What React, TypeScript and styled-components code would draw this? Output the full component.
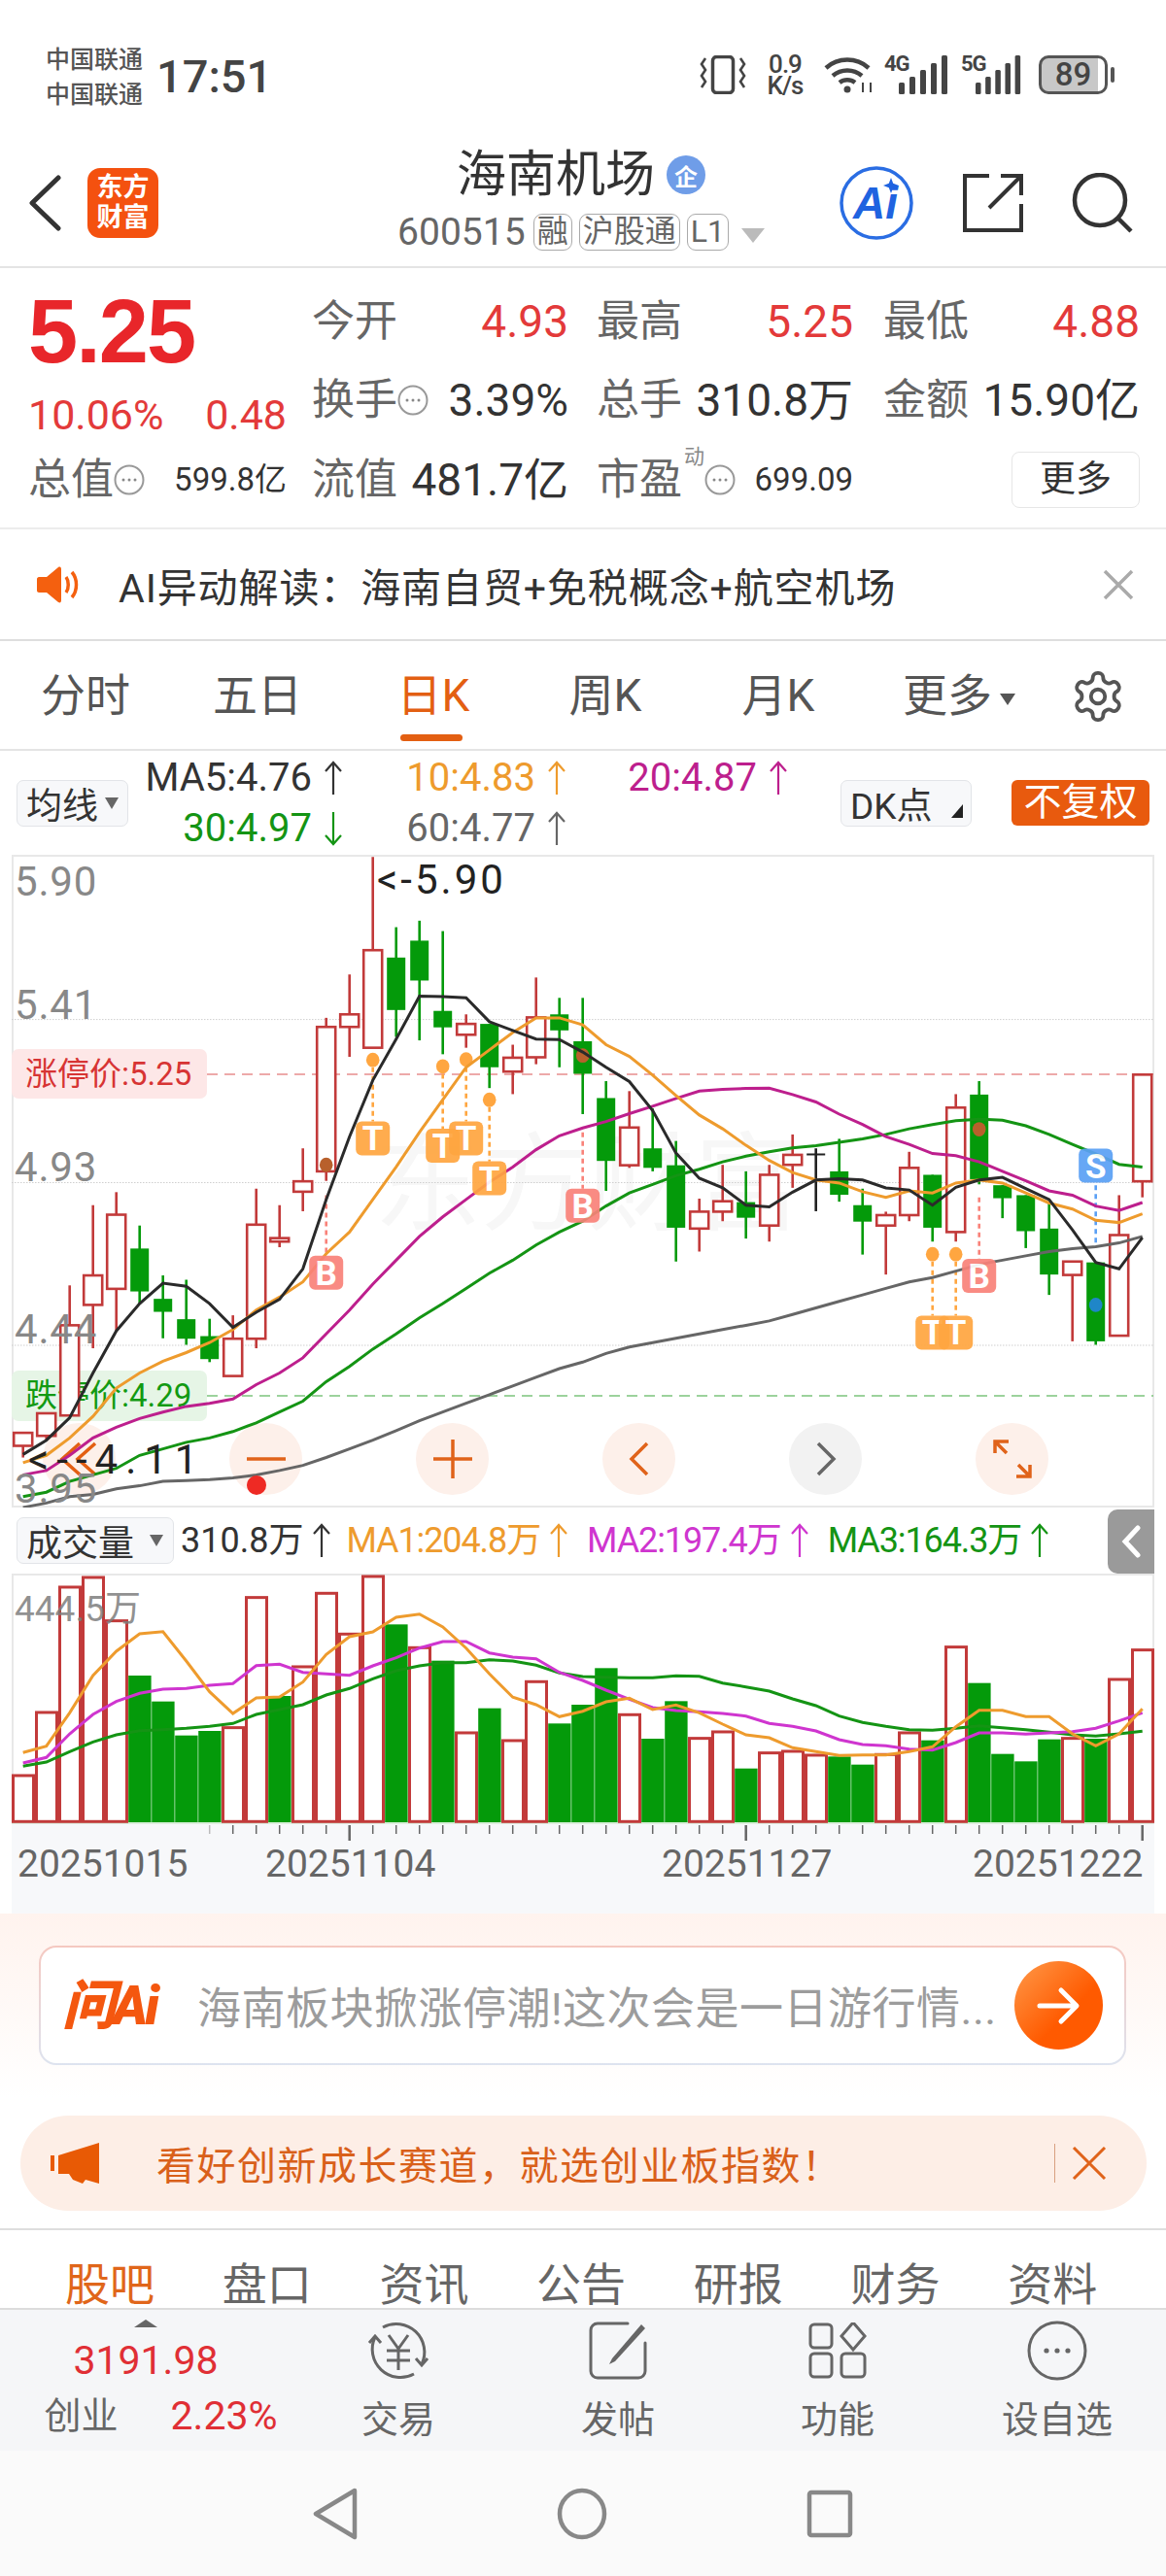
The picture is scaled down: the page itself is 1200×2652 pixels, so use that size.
import React from 'react';
import styled, { createGlobalStyle } from 'styled-components';

const GlobalStyle = createGlobalStyle`
  html, body { margin: 0; padding: 0; background: #fff; }
  body { font-family: Roboto, "Noto Sans CJK SC", sans-serif; }
`;

const Page = styled.div`
  width: 1200px;
  height: 2652px;
  overflow: hidden;
  display: flex;
  flex-direction: column;
  color: #333;
`;

/* ---------- status bar ---------- */
const StatusBar = styled.div`
  height: 135px;
  flex: none;
  display: flex;
  align-items: flex-start;
  padding: 44px 60px 0 47px;
  box-sizing: border-box;
  color: #444;
`;
const Carriers = styled.div`
  width: 108px;
  font-size: 25px;
  line-height: 36px;
  font-weight: 500;
  color: #555;
  white-space: nowrap;
`;
const Clock = styled.div`
  margin-top: 7px;
  margin-left: 6px;
  font-size: 47px;
  line-height: 56px;
  font-weight: 500;
`;
const StatusIcons = styled.div`
  margin-left: auto;
  display: flex;
  align-items: flex-start;
  gap: 20px;
  margin-top: 13px;
`;
const Speed = styled.div`
  width: 40px;
  margin-top: -2px;
  text-align: center;
  font-size: 26px;
  line-height: 22px;
  font-weight: 500;
  letter-spacing: -1px;
`;
const NetLabel = styled.div<{ $width: number; $gap: number }>`
  position: relative;
  display: flex;
  justify-content: flex-end;
  align-items: flex-end;
  width: ${({ $width }) => $width}px;
  margin-left: ${({ $gap }) => $gap}px;
  height: 40px;
`;
const NetText = styled.span`
  position: absolute;
  left: 0;
  top: -3px;
  font-size: 22px;
  line-height: 24px;
  font-weight: 700;
  letter-spacing: -1px;
`;
const Battery = styled.div`
  position: relative;
  width: 71px;
  height: 40px;
  box-sizing: border-box;
  border: 3px solid #555;
  border-radius: 10px;
  margin-left: -3px;
  background: linear-gradient(90deg, #c8c8c8 0 89%, #fff 89%);
  text-align: center;
  font-size: 33px;
  line-height: 34px;
  font-weight: 500;
  &::after {
    content: '';
    position: absolute;
    right: -10px;
    top: 9px;
    width: 4px;
    height: 16px;
    border-radius: 2px;
    background: #555;
  }
`;

/* ---------- header ---------- */
const Header = styled.header`
  height: 141px;
  flex: none;
  box-sizing: border-box;
  border-bottom: 2px solid #e4e4e4;
  display: grid;
  grid-template-columns: 1fr auto 1fr;
  padding: 18px 33px 0 29px;
`;
const HeaderSide = styled.div<{ $end?: boolean }>`
  display: flex;
  align-items: center;
  height: 87px;
  margin-top: 12px;
  justify-content: ${({ $end }) => ($end ? 'flex-end' : 'flex-start')};
  gap: ${({ $end }) => ($end ? '49px' : '27px')};
`;
const AppLogo = styled.div`
  width: 73px;
  height: 72px;
  border-radius: 13px;
  background: #f4510f;
  color: #fff;
  font-size: 27px;
  line-height: 31px;
  font-weight: 700;
  text-align: center;
  padding-top: 5px;
  box-sizing: border-box;
`;
const TitleBlock = styled.div`
  display: flex;
  flex-direction: column;
  align-items: center;
`;
const TitleRow = styled.div`
  display: flex;
  align-items: center;
  gap: 12px;
  height: 54px;
`;
const Title = styled.h1`
  margin: 0;
  font-size: 51px;
  line-height: 54px;
  font-weight: 400;
  color: #333;
`;
const OwnerBadge = styled.span`
  width: 40px;
  height: 40px;
  border-radius: 50%;
  background: #6f9de8;
  color: #fff;
  font-size: 24px;
  font-weight: 700;
  display: flex;
  align-items: center;
  justify-content: center;
`;
const CodeRow = styled.div`
  display: flex;
  align-items: center;
  gap: 7px;
  margin-top: 12px;
  height: 40px;
  color: #666;
`;
const Code = styled.span`
  font-size: 39px;
  line-height: 40px;
  margin-right: 1px;
`;
const CodeTag = styled.span`
  height: 38px;
  box-sizing: border-box;
  border: 1.5px solid #aaa;
  border-radius: 9px;
  padding: 0 3px;
  font-size: 32px;
  line-height: 34px;
  color: #666;
`;
const CodeCaret = styled.span`
  margin-left: 6px;
  margin-top: 6px;
  width: 0;
  height: 0;
  border-left: 12px solid transparent;
  border-right: 12px solid transparent;
  border-top: 15px solid #bbb;
`;

/* ---------- quote block ---------- */
const Quote = styled.section`
  height: 269px;
  flex: none;
  box-sizing: border-box;
  border-bottom: 2px solid #ececec;
  padding: 15px 0 0 29px;
  display: grid;
  grid-template-columns: 292px 293px 295px 263px;
  grid-template-rows: 80px 82px 81px;
  align-items: center;
`;
const PriceBox = styled.div`
  grid-row: 1 / span 2;
  align-self: start;
`;
const Price = styled.div`
  font-family: "Liberation Sans", Arial, sans-serif;
  font-size: 92px;
  line-height: 100px;
  font-weight: 700;
  letter-spacing: -2px;
  color: #e8262a;
`;
const Change = styled.div`
  margin-top: 13px;
  width: 266px;
  display: flex;
  justify-content: space-between;
  font-size: 43px;
  line-height: 46px;
  color: #e33a3a;
`;
const Stat = styled.div<{ $wide?: boolean }>`
  width: ${({ $wide }) => ($wide ? '266px' : '264px')};
  display: flex;
  align-items: center;
  white-space: nowrap;
`;
const StatLabel = styled.span`
  font-size: 44px;
  line-height: 50px;
  color: #666;
`;
const StatValue = styled.span<{ $up?: boolean; $small?: boolean }>`
  margin-left: auto;
  font-size: ${({ $small }) => ($small ? '33px' : '46px')};
  line-height: 50px;
  color: ${({ $up }) => ($up ? '#e33a3a' : '#333')};
`;
const Super = styled.span`
  font-size: 21px;
  line-height: 22px;
  color: #888;
  align-self: flex-start;
  margin: -10px 0 0 2px;
`;
const MoreButton = styled.button`
  width: 132px;
  height: 58px;
  justify-self: end;
  margin-right: -1px;
  background: #fff;
  border: 1.5px solid #e6e6e6;
  border-radius: 8px;
  color: #333;
  font: inherit;
  font-size: 37px;
  line-height: 50px;
  padding: 0;
`;

/* ---------- notice ---------- */
const AiNotice = styled.div`
  height: 115px;
  flex: none;
  box-sizing: border-box;
  border-bottom: 2px solid #dedede;
  display: flex;
  align-items: center;
  padding: 0 33px 0 38px;
`;
const NoticeText = styled.div`
  margin-left: 38px;
  font-size: 41px;
  color: #333;
  white-space: nowrap;
  letter-spacing: 0.9px;
`;
const NoticeClose = styled.span`
  margin-left: auto;
  display: flex;
`;

/* ---------- period tabs ---------- */
const PeriodTabs = styled.nav`
  height: 113px;
  flex: none;
  box-sizing: border-box;
  border-bottom: 2px solid #e4e4e4;
  position: relative;
  display: flex;
  align-items: flex-start;
  padding-top: 28px;
`;
const PeriodTab = styled.div<{ $active?: boolean; $width: number }>`
  position: relative;
  width: ${({ $width }) => $width}px;
  flex: none;
  font-size: 46px;
  line-height: 56px;
  text-align: center;
  color: ${({ $active }) => ($active ? '#e35f12' : '#555')};
  &::after {
    content: ${({ $active }) => ($active ? "''" : 'none')};
    position: absolute;
    left: 50%;
    margin-left: -34px;
    top: 68px;
    width: 64px;
    height: 7px;
    border-radius: 4px;
    background: #e35f12;
  }
`;
const Caret = styled.span`
  display: inline-block;
  margin-left: 8px;
  vertical-align: 6px;
  width: 0;
  height: 0;
  border-left: 8px solid transparent;
  border-right: 8px solid transparent;
  border-top: 12px solid #555;
`;
const GearSlot = styled.div`
  margin-left: 21px;
  display: flex;
`;

/* ---------- indicator legends ---------- */
const MaBar = styled.div`
  height: 107px;
  flex: none;
  display: flex;
  align-items: center;
  padding: 0 17px;
`;
const SelectBox = styled.div<{ $width: number; $gap?: number }>`
  width: ${({ $width }) => $width}px;
  height: 48px;
  flex: none;
  box-sizing: border-box;
  background: #f7f8fa;
  border: 1.5px solid #e2e4e8;
  border-radius: 7px;
  padding-left: 9px;
  margin-left: ${({ $gap }) => $gap ?? 0}px;
  display: flex;
  align-items: center;
  font-size: 37px;
  color: #333;
  white-space: nowrap;
  position: relative;
`;
const SelectCaret = styled.span<{ $gap?: number }>`
  margin-left: ${({ $gap }) => $gap ?? 7}px;
  width: 0;
  height: 0;
  border-left: 7px solid transparent;
  border-right: 7px solid transparent;
  border-top: 12px solid #666;
`;
const CornerCaret = styled.span`
  position: absolute;
  right: 8px;
  bottom: 8px;
  width: 0;
  height: 0;
  border-left: 12px solid transparent;
  border-bottom: 14px solid #222;
`;
const MaGrid = styled.div`
  margin-left: 8px;
  display: grid;
  grid-template-columns: 213px 230px 228px;
  grid-auto-rows: 52px;
  justify-items: end;
`;
const MaValue = styled.div<{ $color: string }>`
  display: flex;
  align-items: center;
  color: ${({ $color }) => $color};
  font-size: 40px;
  line-height: 52px;
  white-space: nowrap;
`;
const PlainRight = styled.div`
  margin-left: 41px;
  width: 142px;
  height: 47px;
  flex: none;
  border-radius: 6px;
  background: #e85a0e;
  color: #fff;
  font-size: 39px;
  line-height: 47px;
  text-align: center;
`;

/* ---------- charts ---------- */
const ChartFrame = styled.div<{ $height: number }>`
  position: relative;
  flex: none;
  margin-left: 12px;
  width: 1176px;
  height: ${({ $height }) => $height}px;
  box-shadow: inset 0 0 0 2px #e8e8e8;
  overflow: hidden;
`;
const ChartSvg = styled.svg`
  position: absolute;
  left: 0;
  top: 0;
`;
const ControlsRow = styled.div`
  position: absolute;
  left: 32px;
  top: 585px;
  display: flex;
  gap: 117px;
`;
const RoundControl = styled.div<{ $muted?: boolean }>`
  width: 75px;
  height: 74px;
  border-radius: 50%;
  display: flex;
  align-items: center;
  justify-content: center;
  background: ${({ $muted }) => ($muted ? '#f2f2f2' : '#fdf0ea')};
`;
const VolumeBar = styled.div`
  height: 68px;
  flex: none;
  position: relative;
  display: flex;
  align-items: center;
  padding-left: 17px;
`;
const VolumeValue = styled.div<{ $color: string; $gap: number; $tight?: boolean }>`
  display: flex;
  align-items: center;
  margin-left: ${({ $gap }) => $gap}px;
  font-size: 36px;
  line-height: 48px;
  letter-spacing: ${({ $tight }) => ($tight ? '-1.1px' : '0')};
  white-space: nowrap;
  color: ${({ $color }) => $color};
`;
const CollapseTab = styled.div`
  position: absolute;
  right: 12px;
  top: 2px;
  width: 48px;
  height: 66px;
  border-radius: 10px 0 0 10px;
  background: #9a9a9a;
  display: flex;
  align-items: center;
  justify-content: center;
`;
const DateAxis = styled.div`
  position: relative;
  flex: none;
  margin-left: 12px;
  width: 1176px;
  height: 92px;
  background: #f7f8fa;
`;

/* ---------- promo block ---------- */
const Promo = styled.section`
  height: 326px;
  flex: none;
  box-sizing: border-box;
  border-bottom: 2px solid #dedede;
  background: linear-gradient(180deg, #fff3ee 0, #fff 190px);
  padding: 33px 41px 0 40px;
`;
const AskBox = styled.div`
  height: 123px;
  box-sizing: border-box;
  border-radius: 18px;
  border: 2.5px solid transparent;
  background:
    linear-gradient(#fff, #fff) padding-box,
    linear-gradient(180deg, #f5c8c0, #dde3ef) border-box;
  display: flex;
  align-items: center;
  padding: 0 22px 0 22px;
`;
const AskLogo = styled.div`
  width: 106px;
  flex: none;
  font-size: 55px;
  line-height: 56px;
  font-weight: 900;
  font-style: italic;
  color: #f4570f;
  white-space: nowrap;
  letter-spacing: -3px;
`;
const AskText = styled.div`
  margin-left: 33px;
  font-size: 45px;
  color: #9c9c9c;
  white-space: nowrap;
  letter-spacing: 0.5px;
  width: 830px;
  overflow: hidden;
  flex: none;
`;
const AskGo = styled.div`
  margin-left: auto;
  width: 91px;
  height: 91px;
  flex: none;
  border-radius: 50%;
  background: linear-gradient(135deg, #ff9a4a 0, #ff5a00 60%);
  display: flex;
  align-items: center;
  justify-content: center;
`;
const AdBanner = styled.div`
  margin: 52px -21px 0 -19px;
  height: 98px;
  border-radius: 49px;
  background: #fdeee6;
  display: flex;
  align-items: center;
  padding: 0 41px 0 31px;
`;
const AdText = styled.div`
  margin-left: 59px;
  font-size: 40px;
  letter-spacing: 1.5px;
  color: #d9601a;
  white-space: nowrap;
`;
const AdClose = styled.div`
  margin-left: auto;
  height: 40px;
  padding-left: 17px;
  border-left: 1px solid #d9a080;
  display: flex;
  align-items: center;
`;

/* ---------- content tabs ---------- */
const ContentTabs = styled.nav`
  height: 82px;
  flex: none;
  box-sizing: border-box;
  border-bottom: 2px solid #dcdcdc;
  overflow: hidden;
  display: flex;
  padding: 30px 0 0 67px;
  gap: 69.7px;
`;
const ContentTab = styled.div<{ $active?: boolean }>`
  font-size: 46px;
  line-height: 52px;
  width: 92px;
  flex: none;
  white-space: nowrap;
  color: ${({ $active }) => ($active ? '#e0661a' : '#666')};
`;

/* ---------- bottom toolbar ---------- */
const Toolbar = styled.div`
  height: 145px;
  flex: none;
  background: #f5f6f8;
  display: flex;
`;
const IndexBlock = styled.div`
  width: 297px;
  flex: none;
  padding-top: 10px;
  box-sizing: border-box;
  display: flex;
  flex-direction: column;
  align-items: center;
`;
const IndexCaret = styled.span`
  margin-left: 3px;
  width: 0;
  height: 0;
  border-left: 12px solid transparent;
  border-right: 12px solid transparent;
  border-bottom: 8px solid #666;
`;
const IndexValue = styled.div`
  margin: 10px 0 0 3px;
  font-size: 41px;
  line-height: 48px;
  color: #e02f35;
`;
const IndexRow = styled.div`
  margin-top: 11px;
  width: 240px;
  margin-left: 34px;
  display: flex;
  justify-content: space-between;
  align-items: center;
  font-size: 38px;
  line-height: 44px;
`;
const IndexName = styled.span`
  color: #666;
`;
const IndexChange = styled.span`
  color: #e02f35;
  font-size: 41px;
`;
const ToolItem = styled.div`
  width: 226px;
  flex: none;
  display: flex;
  flex-direction: column;
  align-items: center;
  padding-top: 10px;
  box-sizing: border-box;
`;
const ToolIcon = styled.div`
  height: 64px;
  display: flex;
  align-items: center;
`;
const ToolLabel = styled.div`
  margin-top: 17px;
  font-size: 38px;
  line-height: 44px;
  color: #666;
`;

/* ---------- system navigation ---------- */
const SystemNav = styled.div`
  height: 129px;
  flex: none;
  background: #fafafa;
  display: flex;
  align-items: center;
  padding: 0 0 0 322px;
  gap: 205px;
`;

/* ---------- chart data: y values are in a 2.24 / 3 units-per-px grid ---------- */
type Candle = [number, number, number, number, 'r' | 'g' | 'k'];

const CANDLES: Candle[] = [
  [1333, 1363, 1333, 1390, 'r'], [1288, 1340, 1288, 1350, 'r'], [1085, 1293, 993, 1293, 'r'],
  [970, 1038, 808, 1138, 'r'], [830, 1001, 778, 1100, 'r'], [908, 1007, 855, 1035, 'g'],
  [1024, 1054, 970, 1115, 'g'], [1071, 1116, 980, 1130, 'g'], [1110, 1163, 1070, 1170, 'g'],
  [1116, 1202, 1062, 1202, 'r'], [853, 1116, 770, 1138, 'r'], [884, 892, 808, 905, 'r'],
  [753, 777, 677, 822, 'r'], [397, 730, 376, 752, 'r'], [368, 397, 276, 466, 'r'],
  [220, 445, 5, 445, 'r'], [237, 358, 167, 420, 'g'], [198, 290, 152, 428, 'g'],
  [360, 398, 176, 460, 'g'], [390, 415, 368, 445, 'r'], [390, 490, 390, 538, 'g'],
  [468, 500, 438, 552, 'r'], [375, 467, 283, 483, 'r'], [368, 405, 330, 490, 'g'],
  [430, 505, 330, 598, 'g'], [561, 706, 522, 775, 'g'], [629, 716, 545, 722, 'r'],
  [677, 722, 585, 730, 'g'], [716, 860, 660, 938, 'g'], [823, 862, 793, 915, 'r'],
  [799, 823, 715, 845, 'r'], [801, 837, 730, 885, 'g'], [738, 855, 715, 892, 'r'],
  [692, 715, 645, 768, 'r'], [691, 691, 677, 822, 'k'], [730, 784, 655, 800, 'g'],
  [808, 846, 770, 922, 'g'], [831, 855, 823, 968, 'r'], [722, 831, 685, 845, 'r'],
  [738, 860, 738, 892, 'g'], [583, 870, 552, 892, 'r'], [553, 748, 522, 760, 'g'],
  [762, 792, 762, 838, 'g'], [785, 868, 785, 907, 'g'], [862, 968, 800, 1015, 'g'],
  [938, 969, 938, 1122, 'r'], [940, 1122, 940, 1130, 'g'], [877, 1109, 785, 1109, 'r'],
  [507, 753, 507, 790, 'r'],
];

const MA5 = [1383, 1350, 1298, 1195, 1098, 1035, 988, 995, 1035, 1090, 1055, 1025, 955, 795, 650, 520, 425, 326, 327, 330, 385, 405, 425, 426, 455, 490, 523, 590, 688, 746, 768, 808, 812, 778, 750, 747, 750, 768, 773, 808, 767, 750, 744, 770, 795, 865, 940, 955, 883];
const MA10 = [1402, 1385, 1345, 1295, 1230, 1195, 1168, 1148, 1125, 1095, 1050, 1020, 985, 920, 870, 795, 720, 640, 565, 490, 450, 410, 376, 376, 392, 438, 465, 508, 555, 600, 632, 670, 705, 733, 750, 757, 777, 790, 775, 780, 757, 750, 757, 780, 803, 817, 843, 848, 828];
const MA20 = [1430, 1420, 1385, 1345, 1320, 1300, 1285, 1272, 1265, 1255, 1222, 1195, 1160, 1105, 1050, 990, 935, 880, 835, 795, 755, 720, 680, 648, 630, 615, 597, 580, 562, 545, 541, 539, 538, 553, 570, 598, 622, 650, 668, 689, 694, 708, 730, 752, 775, 785, 810, 820, 802];
const MA30 = [1480, 1470, 1445, 1430, 1415, 1385, 1370, 1355, 1345, 1330, 1310, 1285, 1260, 1215, 1180, 1140, 1105, 1068, 1035, 1000, 965, 935, 900, 870, 845, 810, 780, 760, 740, 725, 708, 695, 685, 676, 671, 663, 655, 645, 632, 622, 613, 610, 612, 625, 645, 668, 690, 714, 720];
const MA60 = [1505, 1495, 1480, 1475, 1462, 1455, 1445, 1443, 1441, 1437, 1430, 1420, 1408, 1390, 1370, 1350, 1328, 1305, 1285, 1265, 1245, 1225, 1205, 1185, 1170, 1150, 1135, 1125, 1115, 1105, 1095, 1085, 1075, 1060, 1045, 1030, 1015, 1000, 985, 975, 960, 945, 935, 925, 915, 908, 904, 895, 880];

const VOLUME: [number, 'r' | 'g'][] = [
  [860, 'r'], [665, 'r'], [278, 'r'], [248, 'r'], [382, 'r'], [555, 'g'], [635, 'g'], [740, 'g'], [726, 'g'], [712, 'r'],
  [310, 'r'], [618, 'g'], [524, 'r'], [297, 'r'], [423, 'r'], [245, 'r'], [397, 'g'], [465, 'r'], [509, 'g'], [728, 'r'],
  [656, 'g'], [752, 'r'], [570, 'r'], [703, 'g'], [645, 'g'], [532, 'g'], [672, 'r'], [750, 'g'], [634, 'g'], [745, 'r'],
  [725, 'r'], [842, 'g'], [790, 'r'], [785, 'r'], [797, 'r'], [805, 'g'], [830, 'g'], [795, 'r'], [728, 'r'], [755, 'g'],
  [463, 'r'], [578, 'g'], [797, 'g'], [820, 'g'], [752, 'g'], [745, 'r'], [750, 'g'], [563, 'r'], [472, 'r'],
];
const VOL_MA1 = [793, 773, 670, 555, 480, 426, 419, 510, 605, 672, 624, 621, 575, 490, 435, 420, 375, 365, 405, 470, 550, 622, 645, 682, 665, 636, 625, 660, 646, 670, 705, 738, 747, 778, 790, 802, 800, 800, 790, 775, 713, 662, 662, 682, 682, 735, 772, 735, 658];
const VOL_MA2 = [825, 808, 735, 675, 635, 610, 597, 595, 585, 580, 524, 520, 545, 550, 554, 525, 500, 470, 450, 450, 485, 498, 503, 545, 570, 600, 628, 654, 663, 667, 672, 680, 703, 712, 726, 753, 768, 772, 782, 785, 762, 732, 732, 736, 732, 728, 718, 695, 670];
const VOL_MA3 = [835, 822, 790, 760, 738, 725, 722, 718, 712, 703, 675, 660, 645, 615, 595, 565, 540, 525, 515, 515, 506, 510, 523, 547, 558, 560, 562, 562, 556, 557, 578, 590, 603, 627, 648, 680, 700, 712, 722, 724, 718, 710, 716, 722, 730, 738, 742, 735, 727];

const COLORS = {
  red: '#c23a3a',
  green: '#049a0a',
  ma5: '#2a2a2a',
  ma10: '#ee9b2d',
  ma20: '#bd1f8d',
  ma30: '#149414',
  ma60: '#666666',
  vol2: '#cf35cf',
};

const candleX = (i: number) => 23.7 + 24 * i;
const priceY = (v: number) => v / 2.24;
const volY = (v: number) => (v - 240) / 3;

const linePath = (values: number[], toY: (v: number) => number) =>
  values.map((v, i) => `${i ? 'L' : 'M'}${candleX(i).toFixed(1)} ${toY(v).toFixed(1)}`).join(' ');

type Signal = { i: number; kind: 'T' | 'B' | 'S'; dot: number; from: number; to: number; box: number };

const SIGNALS: Signal[] = [
  { i: 13, kind: 'B', dot: 715, from: 785, to: 925, box: 964 },
  { i: 15, kind: 'T', dot: 473, from: 490, to: 615, box: 654 },
  { i: 18, kind: 'T', dot: 488, from: 505, to: 632, box: 671 },
  { i: 19, kind: 'T', dot: 472, from: 490, to: 615, box: 654 },
  { i: 20, kind: 'T', dot: 565, from: 582, to: 707, box: 746 },
  { i: 24, kind: 'B', dot: 463, from: 640, to: 770, box: 809 },
  { i: 39, kind: 'T', dot: 921, from: 938, to: 1063, box: 1102 },
  { i: 40, kind: 'T', dot: 921, from: 938, to: 1063, box: 1102 },
  { i: 41, kind: 'B', dot: 633, from: 790, to: 932, box: 971 },
  { i: 46, kind: 'S', dot: 1038, from: 762, to: 900, box: 717 },
];

const SIGNAL_FILL = { T: '#ffa640', B: '#f98279', S: '#5aa0f5' };
const DOT_FILL = { T: '#ffa640', B: '#b8602c', S: '#1f86c8' };

const Arrow: React.FC<{ color: string; down?: boolean; left?: number }> = ({ color, down, left = 12 }) => (
  <svg width="20" height="38" viewBox="0 0 20 38" style={{ marginLeft: left, flex: 'none' }}>
    <path
      d={down ? 'M10 2V35M2 26l8 9 8-9' : 'M10 36V3M2 12l8-9 8 9'}
      fill="none"
      stroke={color}
      strokeWidth="2.2"
    />
  </svg>
);

const DotsCircle: React.FC<{ size?: number }> = ({ size = 32 }) => (
  <svg width={size} height={size} viewBox="0 0 32 32" style={{ flex: 'none' }}>
    <circle cx="16" cy="16" r="14.5" fill="none" stroke="#999" strokeWidth="2" />
    <circle cx="10" cy="16" r="1.5" fill="#888" />
    <circle cx="16" cy="16" r="1.5" fill="#888" />
    <circle cx="22" cy="16" r="1.5" fill="#888" />
  </svg>
);

const SignalBars: React.FC<{ width: number }> = ({ width }) => (
  <svg width={width} height="40" viewBox="0 0 52 40" fill="#444" preserveAspectRatio="none">
    <rect x="0" y="28" width="6" height="12" rx="1.5" />
    <rect x="11" y="22" width="6" height="18" rx="1.5" />
    <rect x="22" y="15" width="6" height="25" rx="1.5" />
    <rect x="33" y="8" width="6" height="32" rx="1.5" />
    <rect x="44" y="0" width="6" height="40" rx="1.5" />
  </svg>
);

const PriceChart: React.FC = () => (
  <ChartFrame $height={672}>
    <ControlsRow>
      <RoundControl>
        <svg width="48" height="40" viewBox="0 0 48 40" fill="none" stroke="#e35f12" strokeWidth="3.5">
          <path d="M24 4 6 20l18 16M40 4 22 20l18 16" />
        </svg>
      </RoundControl>
      <RoundControl>
        <svg width="40" height="10" viewBox="0 0 40 10"><path d="M0 5h40" stroke="#e0631a" strokeWidth="3.5" /></svg>
      </RoundControl>
      <RoundControl>
        <svg width="40" height="40" viewBox="0 0 40 40"><path d="M0 20h40M20 0v40" stroke="#e0631a" strokeWidth="3.5" /></svg>
      </RoundControl>
      <RoundControl>
        <svg width="24" height="36" viewBox="0 0 24 36" fill="none"><path d="M20 2 4 18l16 16" stroke="#e0631a" strokeWidth="3.5" /></svg>
      </RoundControl>
      <RoundControl $muted>
        <svg width="24" height="36" viewBox="0 0 24 36" fill="none"><path d="M4 2l16 16L4 34" stroke="#666" strokeWidth="3.5" /></svg>
      </RoundControl>
      <RoundControl>
        <svg width="40" height="40" viewBox="0 0 40 40" fill="none" stroke="#e0631a" strokeWidth="3.5">
          <path d="M2 14V2h14M2 2l12 12M38 26v12H24M38 38 26 26" />
        </svg>
      </RoundControl>
    </ControlsRow>
    <ChartSvg width="1176" height="672" viewBox="12 0 1176 672" fontFamily='Roboto, "Noto Sans CJK SC", sans-serif'>
      <text x="385" y="378" fontSize="110" fill="#f7f7f7">东方财富</text>

      {[169.6, 337.5, 505].map((y) => (
        <line key={y} x1="12" x2="1187" y1={y} y2={y} stroke="#cfcfcf" strokeWidth="1" strokeDasharray="1.5 1.5" />
      ))}
      <line x1="213" x2="1187" y1="226" y2="226" stroke="#e78d8d" strokeWidth="1.5" strokeDasharray="11 7" />
      <line x1="213" x2="1187" y1="557" y2="557" stroke="#7cc47c" strokeWidth="1.5" strokeDasharray="11 7" />

      <rect x="12" y="200" width="201" height="51" rx="7" fill="#fde7e7" />
      <text x="26" y="237" fontSize="33" fill="#d73434">涨停价:5.25</text>
      <rect x="12" y="531" width="201" height="52" rx="7" fill="#e6f5e6" />
      <text x="26" y="568" fontSize="33" fill="#129a12">跌停价:4.29</text>

      {CANDLES.map(([top, bottom, high, low, tone], i) => {
        const x = candleX(i);
        const stroke = tone === 'r' ? COLORS.red : tone === 'g' ? COLORS.green : '#222';
        const isUp = tone === 'r';
        const halfWidth = 9.5;
        return (
          <g key={i}>
            <line x1={x} x2={x} y1={priceY(high)} y2={priceY(low)} stroke={stroke} strokeWidth="2.6" />
            {tone === 'k' ? (
              <line x1={x - halfWidth} x2={x + halfWidth} y1={priceY(top)} y2={priceY(top)} stroke={stroke} strokeWidth="2" />
            ) : (
              <rect
                x={x - halfWidth}
                y={priceY(top)}
                width={halfWidth * 2}
                height={priceY(bottom) - priceY(top)}
                fill={isUp ? '#fff' : COLORS.green}
                stroke={stroke}
                strokeWidth={isUp ? 2.6 : 0}
              />
            )}
          </g>
        );
      })}

      {SIGNALS.map((s, idx) => (
        <g key={idx}>
          <line x1={candleX(s.i)} x2={candleX(s.i)} y1={priceY(s.from)} y2={priceY(s.to)} stroke={SIGNAL_FILL[s.kind]} strokeWidth="2.6" strokeDasharray="5 4" />
          <ellipse cx={candleX(s.i)} cy={priceY(s.dot)} rx="6.8" ry="7.4" fill={DOT_FILL[s.kind]} />
        </g>
      ))}

      <path d={linePath(MA60, priceY)} fill="none" stroke={COLORS.ma60} strokeWidth="3" />
      <path d={linePath(MA30, priceY)} fill="none" stroke={COLORS.ma30} strokeWidth="3" />
      <path d={linePath(MA20, priceY)} fill="none" stroke={COLORS.ma20} strokeWidth="3" />
      <path d={linePath(MA10, priceY)} fill="none" stroke={COLORS.ma10} strokeWidth="3" />
      <path d={linePath(MA5, priceY)} fill="none" stroke={COLORS.ma5} strokeWidth="3" />

      {SIGNALS.map((s, idx) => (
        <g key={idx} opacity="0.92">
          <rect x={candleX(s.i) - 17.5} y={priceY(s.box) - 17.5} width="35" height="35" rx="6" fill={SIGNAL_FILL[s.kind]} />
          <text x={candleX(s.i)} y={priceY(s.box) + 12.5} fontSize="35" fontWeight="700" fill="#fff" textAnchor="middle">{s.kind}</text>
        </g>
      ))}

      <text x="15" y="41.5" fontSize="42" fill="#888" letterSpacing="0.8">5.90</text>
      <text x="15" y="169" fontSize="42" fill="#888" letterSpacing="0.8">5.41</text>
      <text x="15" y="336" fontSize="42" fill="#888" letterSpacing="0.8">4.93</text>
      <text x="15" y="503" fontSize="42" fill="#888" letterSpacing="0.8">4.44</text>
      <text x="15" y="667" fontSize="42" fill="#888" letterSpacing="0.8">3.95</text>
      <text x="388" y="40" fontSize="42" fill="#222" letterSpacing="3">{'<-5.90'}</text>
      <text x="29" y="637" fontSize="42" fill="#222" letterSpacing="8">{'<--4.11'}</text>
      <ellipse cx="264" cy="649" rx="10" ry="10" fill="#ee2a24" />
    </ChartSvg>
  </ChartFrame>
);

const VolumeChart: React.FC = () => (
  <ChartFrame $height={258}>
    <ChartSvg width="1176" height="258" viewBox="12 0 1176 258" fontFamily='Roboto, "Noto Sans CJK SC", sans-serif'>
      <line x1="12" x2="1187" y1="256.5" y2="256.5" stroke="#d6efd6" strokeWidth="2" />
      {VOLUME.map(([v, tone], i) => {
        const x = 12.2 + 24 * i;
        const y = volY(v);
        return tone === 'r' ? (
          <rect key={i} x={x + 1.3} y={y + 1.3} width="21" height={254 - y} fill="#fff" stroke={COLORS.red} strokeWidth="3" />
        ) : (
          <rect key={i} x={x} y={y} width="23.4" height={256 - y} fill={COLORS.green} />
        );
      })}
      <text x="15" y="49" fontSize="37" fill="#7d7d7d" fillOpacity="0.85">444.5万</text>
      <path d={linePath(VOL_MA3, volY)} fill="none" stroke={COLORS.ma30} strokeWidth="3" />
      <path d={linePath(VOL_MA2, volY)} fill="none" stroke={COLORS.vol2} strokeWidth="3" />
      <path d={linePath(VOL_MA1, volY)} fill="none" stroke={COLORS.ma10} strokeWidth="3" />
    </ChartSvg>
  </ChartFrame>
);

const Dates: React.FC = () => (
  <DateAxis>
    <ChartSvg width="1176" height="92" viewBox="12 0 1176 92" fontFamily='Roboto, sans-serif'>
      {CANDLES.slice(8).map((_, idx) => {
        const i = idx + 8;
        const major = i === 14 || i === 31 || i === 48;
        return (
          <line
            key={i}
            x1={candleX(i)}
            x2={candleX(i)}
            y1="1"
            y2={major ? 17 : 10}
            stroke={i === 8 ? '#bbb' : '#666'}
            strokeWidth={major ? 2.5 : 1.5}
          />
        );
      })}
      <text x="18" y="54" fontSize="39" fill="#666">20251015</text>
      <text x="273" y="54" fontSize="39" fill="#666">20251104</text>
      <text x="681" y="54" fontSize="39" fill="#666">20251127</text>
      <text x="1001" y="54" fontSize="39" fill="#666">20251222</text>
    </ChartSvg>
  </DateAxis>
);

const App: React.FC = () => (
  <Page>
    <GlobalStyle />

    <StatusBar>
      <Carriers>
        中国联通
        <br />
        中国联通
      </Carriers>
      <Clock>17:51</Clock>
      <StatusIcons>
        <svg width="48" height="40" viewBox="0 0 48 40" fill="none" stroke="#444" strokeWidth="2.6">
          <rect x="13.5" y="1.5" width="21" height="37" rx="4" strokeWidth="3.5" />
          <path d="M6 3 2 9l4 6-4 6 4 6-4 6M42 3l4 6-4 6 4 6-4 6 4 6" />
        </svg>
        <Speed>
          0.9
          <br />
          K/s
        </Speed>
        <svg width="52" height="40" viewBox="0 0 52 40" fill="none" stroke="#444" strokeWidth="4.5">
          <path d="M2 13a33 33 0 0 1 44 0M9 21a23 23 0 0 1 30 0M16 28a13 13 0 0 1 16 0" />
          <circle cx="24" cy="35" r="3.5" fill="#444" stroke="none" />
          <path d="M40 28v10M48 28v10" strokeWidth="2" />
        </svg>
        <NetLabel $width={67} $gap={-10}>
          <NetText>4G</NetText>
          <SignalBars width={52} />
        </NetLabel>
        <NetLabel $width={63} $gap={-8}>
          <NetText>5G</NetText>
          <SignalBars width={48} />
        </NetLabel>
        <Battery>89</Battery>
      </StatusIcons>
    </StatusBar>

    <Header>
      <HeaderSide>
        <svg width="34" height="58" viewBox="0 0 34 58" fill="none">
          <path d="M31 3 4 29l27 26" stroke="#333" strokeWidth="5" strokeLinecap="round" strokeLinejoin="round" />
        </svg>
        <AppLogo>
          东方
          <br />
          财富
        </AppLogo>
      </HeaderSide>
      <TitleBlock>
        <TitleRow>
          <Title>海南机场</Title>
          <OwnerBadge>企</OwnerBadge>
        </TitleRow>
        <CodeRow>
          <Code>600515</Code>
          <CodeTag>融</CodeTag>
          <CodeTag>沪股通</CodeTag>
          <CodeTag>L1</CodeTag>
          <CodeCaret />
        </CodeRow>
      </TitleBlock>
      <HeaderSide $end>
        <svg width="78" height="80" viewBox="0 0 78 80" fontFamily='"Liberation Sans", sans-serif'>
          <circle cx="39" cy="40" r="36" fill="none" stroke="#2a6de3" strokeWidth="3.5" />
          <text x="38" y="56" fontSize="46" fontWeight="700" fontStyle="italic" fill="#1f63e0" textAnchor="middle">Ai</text>
          <path d="M54 14l2.2 5.8 5.8 2.2-5.8 2.2-2.2 5.8-2.2-5.8-5.8-2.2 5.8-2.2z" fill="#1f63e0" />
        </svg>
        <svg width="64" height="62" viewBox="0 0 64 62" fill="none" stroke="#333" strokeWidth="4">
          <path d="M28 3H3v56h58V32M40 3h21v20M61 3 28 36" />
        </svg>
        <svg width="64" height="62" viewBox="0 0 64 62" fill="none" stroke="#333" strokeWidth="4.5">
          <circle cx="29" cy="28" r="26" />
          <path d="m47 46 14 14" />
        </svg>
      </HeaderSide>
    </Header>

    <Quote>
      <PriceBox>
        <Price>5.25</Price>
        <Change>
          <span>10.06%</span>
          <span>0.48</span>
        </Change>
      </PriceBox>
      <Stat>
        <StatLabel>今开</StatLabel>
        <StatValue $up>4.93</StatValue>
      </Stat>
      <Stat>
        <StatLabel>最高</StatLabel>
        <StatValue $up>5.25</StatValue>
      </Stat>
      <Stat>
        <StatLabel>最低</StatLabel>
        <StatValue $up>4.88</StatValue>
      </Stat>
      <Stat>
        <StatLabel>换手</StatLabel>
        <DotsCircle />
        <StatValue>3.39%</StatValue>
      </Stat>
      <Stat>
        <StatLabel>总手</StatLabel>
        <StatValue>310.8万</StatValue>
      </Stat>
      <Stat>
        <StatLabel>金额</StatLabel>
        <StatValue>15.90亿</StatValue>
      </Stat>
      <Stat $wide>
        <StatLabel>总值</StatLabel>
        <DotsCircle />
        <StatValue $small>599.8亿</StatValue>
      </Stat>
      <Stat>
        <StatLabel>流值</StatLabel>
        <StatValue>481.7亿</StatValue>
      </Stat>
      <Stat>
        <StatLabel>市盈</StatLabel>
        <Super>动</Super>
        <DotsCircle />
        <StatValue $small>699.09</StatValue>
      </Stat>
      <MoreButton>更多</MoreButton>
    </Quote>

    <AiNotice>
      <svg width="46" height="40" viewBox="0 0 46 40">
        <path d="M2 12h8L22 2c2-1 3 0 3 2v32c0 2-1 3-3 2L10 28H2c-1 0-2-1-2-2V14c0-1 1-2 2-2z" fill="#f4600f" />
        <path d="M30 12c3 4 3 12 0 16M36 7c6 7 6 19 0 26" fill="none" stroke="#f4600f" strokeWidth="3.5" />
      </svg>
      <NoticeText>AI异动解读：海南自贸+免税概念+航空机场</NoticeText>
      <NoticeClose>
        <svg width="32" height="32" viewBox="0 0 32 32">
          <path d="M2 2l28 28M30 2 2 30" stroke="#aaa" strokeWidth="3.5" />
        </svg>
      </NoticeClose>
    </AiNotice>

    <PeriodTabs>
      <PeriodTab $width={176}>分时</PeriodTab>
      <PeriodTab $width={178}>五日</PeriodTab>
      <PeriodTab $width={184} $active>日K</PeriodTab>
      <PeriodTab $width={170}>周K</PeriodTab>
      <PeriodTab $width={186}>月K</PeriodTab>
      <PeriodTab $width={186}>
        更多
        <Caret />
      </PeriodTab>
      <GearSlot>
        <svg width="58" height="58" viewBox="0 0 24 24" fill="none" stroke="#555" strokeWidth="1.6" strokeLinecap="round" strokeLinejoin="round">
          <path d="M12.22 2h-.44a2 2 0 0 0-2 2v.18a2 2 0 0 1-1 1.73l-.43.25a2 2 0 0 1-2 0l-.15-.08a2 2 0 0 0-2.73.73l-.22.38a2 2 0 0 0 .73 2.73l.15.1a2 2 0 0 1 1 1.72v.51a2 2 0 0 1-1 1.74l-.15.09a2 2 0 0 0-.73 2.73l.22.38a2 2 0 0 0 2.73.73l.15-.08a2 2 0 0 1 2 0l.43.25a2 2 0 0 1 1 1.73V20a2 2 0 0 0 2 2h.44a2 2 0 0 0 2-2v-.18a2 2 0 0 1 1-1.73l.43-.25a2 2 0 0 1 2 0l.15.08a2 2 0 0 0 2.73-.73l.22-.39a2 2 0 0 0-.73-2.73l-.15-.08a2 2 0 0 1-1-1.74v-.5a2 2 0 0 1 1-1.74l.15-.09a2 2 0 0 0 .73-2.73l-.22-.38a2 2 0 0 0-2.73-.73l-.15.08a2 2 0 0 1-2 0l-.43-.25a2 2 0 0 1-1-1.73V4a2 2 0 0 0-2-2z" />
          <circle cx="12" cy="12" r="3" />
        </svg>
      </GearSlot>
    </PeriodTabs>

    <MaBar>
      <SelectBox $width={115}>
        均线
        <SelectCaret />
      </SelectBox>
      <MaGrid>
        <MaValue $color="#333">MA5:4.76<Arrow color="#333" /></MaValue>
        <MaValue $color={COLORS.ma10}>10:4.83<Arrow color={COLORS.ma10} /></MaValue>
        <MaValue $color={COLORS.ma20}>20:4.87<Arrow color={COLORS.ma20} /></MaValue>
        <MaValue $color={COLORS.ma30}>30:4.97<Arrow color={COLORS.ma30} down /></MaValue>
        <MaValue $color="#666">60:4.77<Arrow color="#666" /></MaValue>
      </MaGrid>
      <SelectBox $width={135} $gap={54}>
        DK点
        <CornerCaret />
      </SelectBox>
      <PlainRight>不复权</PlainRight>
    </MaBar>

    <PriceChart />

    <VolumeBar>
      <SelectBox $width={162}>
        成交量
        <SelectCaret $gap={16} />
      </SelectBox>
      <VolumeValue $color="#333" $gap={7}>310.8万<Arrow color="#333" left={9} /></VolumeValue>
      <VolumeValue $color={COLORS.ma10} $gap={15} $tight>MA1:204.8万<Arrow color={COLORS.ma10} left={9} /></VolumeValue>
      <VolumeValue $color={COLORS.vol2} $gap={19} $tight>MA2:197.4万<Arrow color={COLORS.vol2} left={9} /></VolumeValue>
      <VolumeValue $color={COLORS.ma30} $gap={19} $tight>MA3:164.3万<Arrow color={COLORS.ma30} left={9} /></VolumeValue>
      <CollapseTab>
        <svg width="20" height="34" viewBox="0 0 20 34" fill="none">
          <path d="M17 3 4 17l13 14" stroke="#fff" strokeWidth="5" strokeLinecap="round" />
        </svg>
      </CollapseTab>
    </VolumeBar>

    <VolumeChart />
    <Dates />

    <Promo>
      <AskBox>
        <AskLogo>问Ai</AskLogo>
        <AskText>海南板块掀涨停潮!这次会是一日游行情...</AskText>
        <AskGo>
          <svg width="48" height="48" viewBox="0 0 48 48" fill="none">
            <path d="M4 24h36M26 8l16 16-16 16" stroke="#fff" strokeWidth="5" strokeLinecap="round" strokeLinejoin="round" />
          </svg>
        </AskGo>
      </AskBox>
      <AdBanner>
        <svg width="50" height="42" viewBox="0 0 50 42" fill="#e85a05">
          <rect x="0" y="13" width="4" height="16" />
          <path d="M8 13 50 0v42l-14-4-3 4-10-4-4-6H8z" />
        </svg>
        <AdText>看好创新成长赛道，就选创业板指数！</AdText>
        <AdClose>
          <svg width="36" height="34" viewBox="0 0 36 34">
            <path d="M2 1l32 32M34 1 2 33" stroke="#e0631a" strokeWidth="3" />
          </svg>
        </AdClose>
      </AdBanner>
    </Promo>

    <ContentTabs>
      <ContentTab $active>股吧</ContentTab>
      <ContentTab>盘口</ContentTab>
      <ContentTab>资讯</ContentTab>
      <ContentTab>公告</ContentTab>
      <ContentTab>研报</ContentTab>
      <ContentTab>财务</ContentTab>
      <ContentTab>资料</ContentTab>
    </ContentTabs>

    <Toolbar>
      <IndexBlock>
        <IndexCaret />
        <IndexValue>3191.98</IndexValue>
        <IndexRow>
          <IndexName>创业</IndexName>
          <IndexChange>2.23%</IndexChange>
        </IndexRow>
      </IndexBlock>
      <ToolItem>
        <ToolIcon>
          <svg width="72" height="64" viewBox="0 0 72 64" fill="none" stroke="#666" strokeWidth="3">
            <path d="M20 8a29 29 0 0 1 40 38M52 56A29 29 0 0 1 12 18" />
            <path d="m6 24 6-7 6 7M54 40l6 7 6-7" />
            <path d="m26 16 10 14 10-14M24 32h24M24 42h24M36 30v22" />
          </svg>
        </ToolIcon>
        <ToolLabel>交易</ToolLabel>
      </ToolItem>
      <ToolItem>
        <ToolIcon>
          <svg width="60" height="60" viewBox="0 0 60 60" fill="none" stroke="#666" strokeWidth="3">
            <path d="M40 2H9a7 7 0 0 0-7 7v42a7 7 0 0 0 7 7h42a7 7 0 0 0 7-7V22" strokeLinecap="round" />
            <path d="M54 3 24 38l-3 6 6-3L58 7z" fill="#666" stroke="none" />
          </svg>
        </ToolIcon>
        <ToolLabel>发帖</ToolLabel>
      </ToolItem>
      <ToolItem>
        <ToolIcon>
          <svg width="60" height="58" viewBox="0 0 60 58" fill="none" stroke="#666" strokeWidth="3">
            <rect x="2" y="2" width="22" height="24" rx="4" />
            <rect x="2" y="32" width="22" height="24" rx="4" />
            <rect x="34" y="32" width="24" height="24" rx="4" />
            <path d="M46 0 58 14 46 28 34 14z" />
          </svg>
        </ToolIcon>
        <ToolLabel>功能</ToolLabel>
      </ToolItem>
      <ToolItem>
        <ToolIcon>
          <svg width="62" height="62" viewBox="0 0 62 62" fill="none">
            <circle cx="31" cy="31" r="29" stroke="#666" strokeWidth="3" />
            <circle cx="20" cy="31" r="2.6" fill="#666" />
            <circle cx="31" cy="31" r="2.6" fill="#666" />
            <circle cx="42" cy="31" r="2.6" fill="#666" />
          </svg>
        </ToolIcon>
        <ToolLabel>设自选</ToolLabel>
      </ToolItem>
    </Toolbar>

    <SystemNav>
      <svg width="46" height="54" viewBox="0 0 46 54" fill="none" stroke="#888" strokeWidth="4.5" strokeLinejoin="round">
        <path d="M43 3 3 27l40 24z" />
      </svg>
      <svg width="52" height="54" viewBox="0 0 52 54" fill="none" stroke="#888" strokeWidth="4.5">
        <ellipse cx="26" cy="27" rx="23" ry="24" />
      </svg>
      <svg width="48" height="50" viewBox="0 0 48 50" fill="none" stroke="#888" strokeWidth="4.5">
        <rect x="3" y="3" width="42" height="44" rx="2" />
      </svg>
    </SystemNav>
  </Page>
);

export default App;
